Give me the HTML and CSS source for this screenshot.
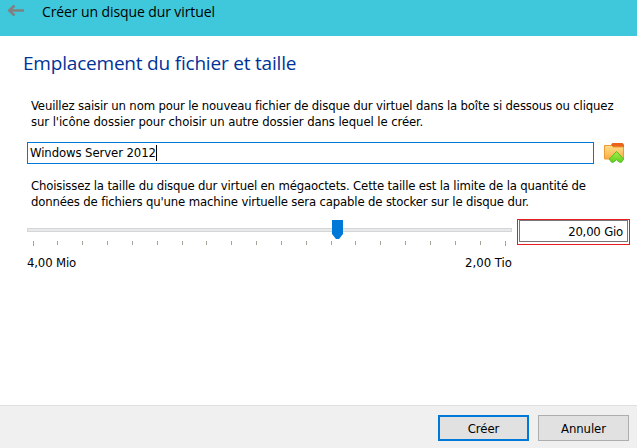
FILE: index.html
```html
<!DOCTYPE html>
<html lang="fr">
<head>
<meta charset="utf-8">
<title>Créer un disque dur virtuel</title>
<link rel="stylesheet" href="styles.css">
</head>
<body>
<div class="dialog">
  <header class="titlebar">
    <svg class="back" width="18" height="14" viewBox="0 0 18 14"><path d="M17 6.500H2.500M7.500 1.500L2.300 6.500l5.200 5" fill="none" stroke="#808080" stroke-width="2.600"/></svg>
    <span class="caption">Créer un disque dur virtuel</span>
  </header>
  <main class="page">
    <h1 class="heading">Emplacement du fichier et taille</h1>
    <p class="text"><span class="line l1">Veuillez saisir un nom pour le nouveau fichier de disque dur virtuel dans la boîte si dessous ou cliquez</span><span class="line l2">sur l'icône dossier pour choisir un autre dossier dans lequel le créer.</span></p>
    <div class="file-row">
      <div class="field"><span class="value">Windows Server 2012</span><i class="caret"></i></div>
      <svg class="folder" width="22" height="22" viewBox="0 0 22 22">
        <defs>
          <linearGradient id="f" x1="0" y1="0" x2="0" y2="1"><stop offset="0" stop-color="#ffe08a"/><stop offset="1" stop-color="#f9ad42"/></linearGradient>
          <linearGradient id="g" x1="0" y1="0" x2="0" y2="1"><stop offset="0" stop-color="#a6f04c"/><stop offset="1" stop-color="#62d01c"/></linearGradient>
        </defs>
        <path d="M8 5V2.500L9.500 1h10L21 2.500V5z" fill="#e8641b"/>
        <path d="M1.500 3.500h7L10 5h10.500v12h-19z" fill="url(#f)" stroke="#ee9a32"/>
        <path d="M13.500 9.500L20.700 17l-2.200 3.200h-2L13.500 17.800l-3 2.400h-2L6.300 17z" fill="url(#g)" stroke="#58bc2a"/>
      </svg>
    </div>
    <p class="text second"><span class="line l3">Choisissez la taille du disque dur virtuel en mégaoctets. Cette taille est la limite de la quantité de</span><span class="line l4">données de fichiers qu'une machine virtuelle sera capable de stocker sur le disque dur.</span></p>
    <div class="size-row">
      <div class="slider">
        <svg width="485" height="30" viewBox="0 0 485 30" shape-rendering="crispEdges">
          <path d="M.5 9.500h484v3H.5z" fill="#e7eaea" stroke="#d6d6d6"/>
          <path d="M6.500 22v5M30.500 22v4M55.500 22v4M80.500 22v4M105.500 22v4M130.500 22v4M155.500 22v4M179.500 22v4M204.500 22v4M229.500 22v4M254.500 22v4M279.500 22v4M304.500 22v4M328.500 22v4M353.500 22v4M378.500 22v4M403.500 22v4M428.500 22v4M453.500 22v4M478.500 22v5" stroke="#a5a39a"/>
          <path d="M305 1h11v14l-4 5h-3l-4-5z" fill="#0078d7" shape-rendering="auto"/>
        </svg>
        <div class="limits"><span>4,00 Mio</span><span class="max">2,00 Tio</span></div>
      </div>
      <div class="marked"><div class="size">20,00 Gio</div></div>
    </div>
  </main>
  <footer class="actions"><button class="button primary">Créer</button><button class="button">Annuler</button></footer>
</div>
</body>
</html>
```
FILE: styles.css
```css
* { box-sizing: border-box; }
body { margin: 0; color: #000; font: 13px/16px "DejaVu Sans Condensed", "DejaVu Sans", sans-serif; font-stretch: condensed; letter-spacing: -.1px; }
.dialog { width: 637px; height: 448px; display: flex; flex-direction: column; background: #fff; overflow: hidden; }
.titlebar { height: 36px; background: #3fc8dc; display: flex; align-items: flex-start; padding-left: 7px; }
.back { margin-top: 4px; }
.caption { margin-left: 17px; font: 14px/24px "Open Sans", sans-serif; font-stretch: normal; letter-spacing: -.1px; white-space: nowrap; }
.page { flex: 1; padding: 16px 7px 0 27px; }
.heading { margin: 0 0 0 -4px; height: 45px; font: 400 19px/23px "Open Sans", sans-serif; font-stretch: normal; letter-spacing: -.2px; color: #003399; white-space: nowrap; }
.text { margin: 0 0 12px 4px; height: 33px; padding-top: 1px; white-space: nowrap; }
.line { display: block; }
.l1 { letter-spacing: -.155px; }
.l2 { letter-spacing: -.095px; }
.l3 { letter-spacing: -.165px; }
.l4 { letter-spacing: -.16px; }
.file-row { display: flex; gap: 9px; height: 22px; }
.field { width: 567px; height: 22px; border: 1px solid #0078d7; padding-left: 2px; display: flex; align-items: center; white-space: nowrap; }
.caret { width: 1px; height: 16px; background: #000; }
.second { margin-top: 13px; margin-bottom: 9px; }
.size-row { display: flex; gap: 5px; }
.slider { width: 485px; padding-top: 1px; }
.slider svg { display: block; margin-top: -1px; }
.limits { display: flex; justify-content: space-between; margin-top: 6px; letter-spacing: -.15px; }
.max { letter-spacing: 0; }
.marked { width: 113px; height: 26px; border: 1px solid #e81c24; padding: 0 1px 2px; }
.size { height: 22px; border: 1px solid #777; text-align: right; padding-right: 4px; line-height: 22px; letter-spacing: -.2px; }
.actions { height: 43px; background: #f0f0f0; border-top: 1px solid #dfdfdf; display: flex; justify-content: flex-end; gap: 9px; padding: 9px 8px 0 0; }
.button { width: 91px; height: 26px; padding: 2px 0 0; background: #e1e1e1; border: 1px solid #adadad; font: inherit; letter-spacing: inherit; color: #000; }
.primary { border: 2px solid #0078d7; }
```
